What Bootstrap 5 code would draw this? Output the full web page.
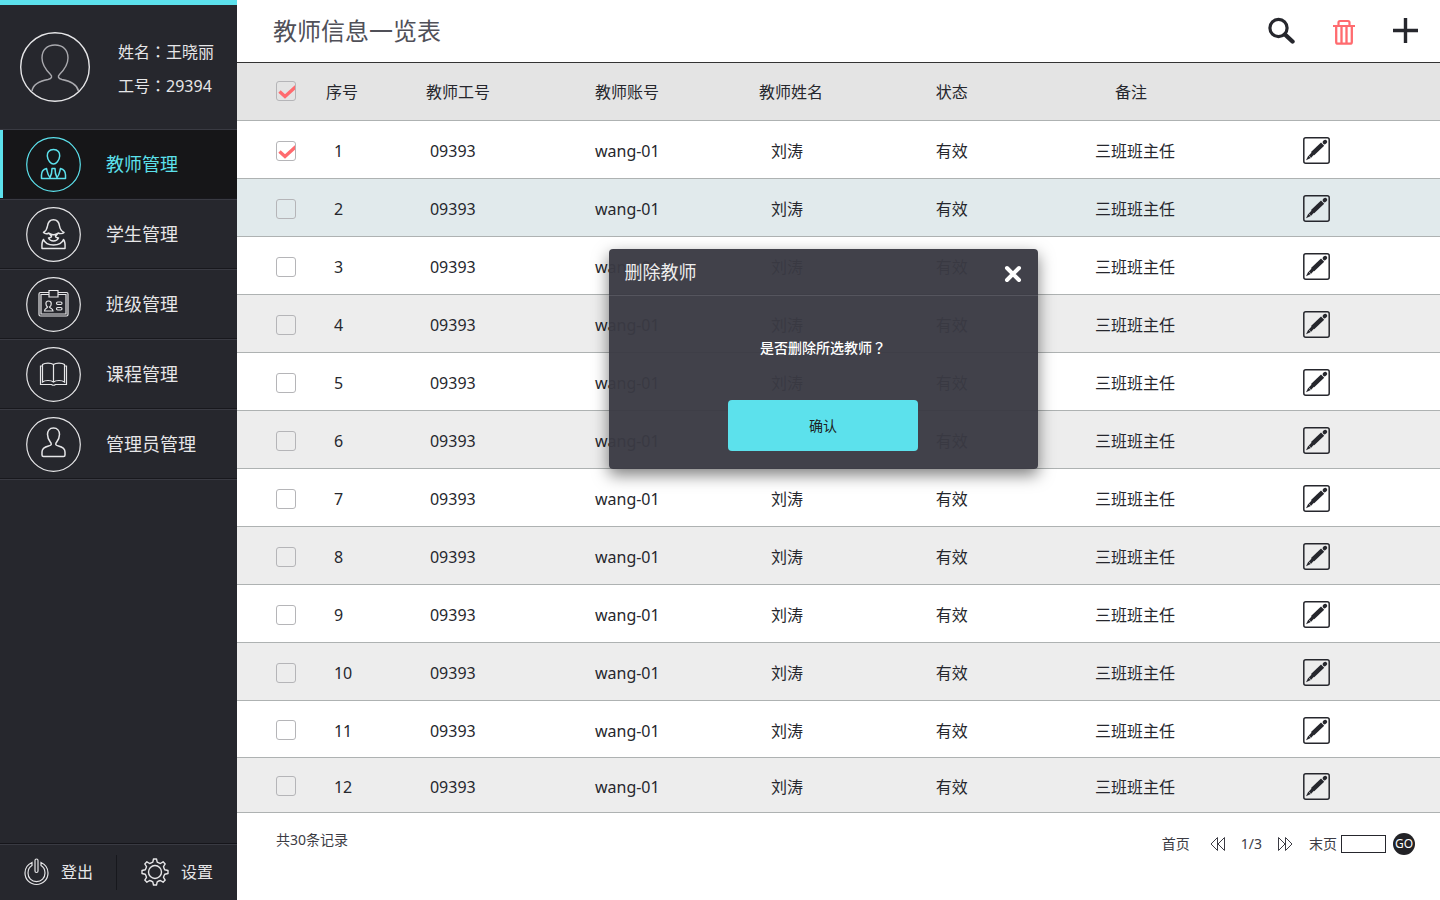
<!DOCTYPE html>
<html lang="zh-CN">
<head>
<meta charset="utf-8">
<meta name="viewport" content="width=device-width, initial-scale=1">
<title>教师信息一览表</title>
<link href="https://cdn.jsdelivr.net/npm/bootstrap@5.3.0/dist/css/bootstrap.min.css" rel="stylesheet">
<style>
:root{--cyan:#5ce1ec;--dark:#26272d;--ink:#26272d;--red:#ff6b6f}
body{font-family:"Noto Sans","Noto Sans CJK SC",sans-serif;font-size:16px;line-height:24px;color:var(--ink);background:#fff}
.mid-punct{font-family:"Noto Sans CJK TC",sans-serif}
svg{display:block;fill:none;stroke:currentColor}
.icon-btn{display:block;border:0;background:none;padding:0;color:inherit}

/* sidebar */
.side{width:237px;background:var(--dark);border-top:5px solid var(--cyan);color:#e6e6e8}
.profile{height:124px;padding:27px 20px 0;gap:28px}
.profile-text{padding-top:2px}
.profile p{line-height:34px;height:34px;margin:0}
.side-link{height:70px;padding-left:26px;gap:25px;font-size:18px;color:#e6e6e8;text-decoration:none;border-top:1px solid #393a42;border-bottom:1px solid #18181d}
.side-link.active{background:#161618;color:var(--cyan);box-shadow:inset 3px 0 var(--cyan)}
.side-end{border-top:1px solid #393a42}
.side-foot{height:57px;border-top:1px solid #15151a;box-shadow:inset 0 1px #393a42}
.side-foot a{color:#e6e6e8;text-decoration:none;gap:12px}
.foot-rule{width:1px;height:35px;margin-left:23px;background:#17181d}

/* main */
.head{height:63px;padding:0 22px 0 36px;border-bottom:1px solid #333}
.head h1{font-size:24px;line-height:36px;font-weight:400;color:#505058;margin:0}
.tools{gap:38px}
.teachers{table-layout:fixed;width:100%;border-collapse:collapse}
.teachers th,.teachers td{font-weight:400;padding:2px 0 0 8px;border-bottom:1px solid #aeb2b2}
.teachers tr{height:58px}
.teachers thead tr{height:57px}
.teachers thead{background:#e4e4e4}
.teachers tbody td{padding-top:4px}
.teachers tbody tr:nth-child(even){background:#ededed}
.teachers tbody tr.hovered{background:#e1eaec}
.teachers tbody tr:nth-child(11){height:57px}
.teachers tbody tr:nth-child(12){height:55px}
.teachers .c-check{padding-left:39px}
.teachers th.c-check{padding-top:0}
.teachers tbody td.c-check{padding-top:3px}
.teachers td.c-no{padding-left:16px}
.teachers td.c-id{padding-left:12px}
.teachers td.c-name{padding-left:20px}
.teachers th.c-note{padding-left:28px}
.teachers tbody td.c-edit{padding-top:3px}
.tick.form-check-input{display:block;width:20px;height:20px;margin:0;border:1px solid #b5b5b8;border-radius:3px;background-color:transparent}
.tick.form-check-input:checked{background-color:transparent;border-color:#b5b5b8;background-size:20px 20px;background-position:center;background-image:url("data:image/svg+xml,%3Csvg xmlns='http://www.w3.org/2000/svg' viewBox='0 0 20 20'%3E%3Cpath d='M3.500 10.500l5.500 5L20 5.500' fill='none' stroke='%23ff6b6f' stroke-width='3.400'/%3E%3C/svg%3E")}
.foot{padding:15px 25px 0 39px;font-size:14px;color:#3c3c44}
.foot a{color:inherit;text-decoration:none}
.pager{padding-top:4px}
.page-box{width:45px;height:18px;border:1px solid var(--ink);padding:0 4px;font-size:12px;margin:0 7px 0 4px}
.go{width:22px;height:22px;border:0;border-radius:50%;background:#222226;color:#fff;font-size:12px;line-height:22px;padding:0;text-align:center}

/* confirm dialog, floats over the table */
.confirm{position:absolute;top:249px;left:calc(50% - 230px);width:429px;height:220px;border-radius:4px;background:rgba(58,58,67,.965);box-shadow:0 6px 16px rgba(0,0,0,.5);color:#fff}
.confirm header{height:47px;padding:0 16px;border-bottom:1px solid #55555e}
.confirm h2{font-size:18px;line-height:46px;margin:0;font-weight:400;color:#eee}
.confirm p{height:24px;margin:39px 0 41px;font-size:14px;font-weight:500}
.ok-btn.btn{width:190px;height:51px;background:var(--cyan);border:0;border-radius:4px;font-size:14px;color:#1d1d22}
</style>
</head>
<body>
<svg width="0" height="0" class="position-absolute" aria-hidden="true">
  <symbol id="i-edit" viewBox="0 0 27 27">
    <rect x=".8" y=".8" width="25.4" height="25.4" rx="2" stroke-width="1.5"/>
    <path d="M3 23.300l2.400-4.800 2.400 2.400z" fill="currentColor" stroke="none"/>
    <path d="M7 19.700l3.200-3.500" stroke-width="3.200"/>
    <path d="M9.600 16.700L19.600 7.200" stroke-width="4.600"/>
    <path d="M21.600 5.300l.6-.5" stroke-width="4" stroke-linecap="round"/>
  </symbol>
</svg>
<div class="d-flex min-vh-100">
  <aside class="side d-flex flex-column flex-shrink-0">
    <div class="profile d-flex">
      <svg width="70" height="70" viewBox="0 0 70 70" class="flex-shrink-0" aria-hidden="true">
        <circle cx="35" cy="35" r="34.3" stroke-width="1.4"/>
        <path d="M12 59C13 52 20 49 28 47.500C32 46.500 32.500 44.500 30.500 42.500C26 38 22 32 22 26C22 18 27 13 35 13S48 18 48 26C48 32 44 38 39.500 42.500C37.500 44.500 38 46.500 42 47.500C50 49 57 52 58.500 59" stroke="#a9a9ae" stroke-width="1.4"/>
      </svg>
      <div class="profile-text">
        <p>姓名<span class="mid-punct" lang="zh-TW">：</span>王晓丽</p>
        <p>工号<span class="mid-punct" lang="zh-TW">：</span>29394</p>
      </div>
    </div>
    <nav>
      <a href="#" class="side-link active d-flex align-items-center" aria-current="page">
        <svg width="55" height="55" viewBox="0 0 55 55" stroke-width="1.200"><circle cx="27.500" cy="27.500" r="26.800"/><path stroke-width="1.500" stroke-linejoin="round" d="M27.500 12.500C23 12.500 21 15.500 21.300 19C21.600 23.500 25 27 27.500 27S33.400 23.500 33.700 19C34 15.500 32 12.500 27.500 12.500zM20.500 31.500C17 32.500 15.500 35 15.500 38V41.500H39.500V38C39.500 35 38 32.500 34.500 31.500C33.500 35 33.500 38 31 40.500C29.500 38 29 35 29 31.500H26C26 35 25.500 38 24 40.500C21.500 38 21.500 35 20.500 31.500z"/></svg>
        教师管理</a>
      <a href="#" class="side-link d-flex align-items-center">
        <svg width="55" height="55" viewBox="0 0 55 55" stroke-width="1.200"><circle cx="27.500" cy="27.500" r="26.800"/><path stroke-width="1.500" stroke-linejoin="round" d="M17.500 25.500C20 24 21 22 21.500 19C22 15 24 12.700 27.500 12.700S33 15 33.500 19C34 22 35 24 38 25.500C36.500 27 33.500 26.800 32 26C31 28 29.500 28.500 29.500 29.500S30.500 30.500 32.500 31C31.500 33 29.500 34 27.500 34S23.500 33 22.500 31C24.500 30.500 25.500 30.500 25.500 29.500S24 28 23 26C21.500 26.800 19 27 17.500 25.500zM24 26.500Q27.500 29 31 26.500M17.500 32.500Q15.500 35 16 41.500H39Q39.500 35 37.500 32.500C36 36.500 32 38 27.500 38S19 36.500 17.500 32.500z"/></svg>
        学生管理</a>
      <a href="#" class="side-link d-flex align-items-center">
        <svg width="55" height="55" viewBox="0 0 55 55" stroke-width="1.200"><circle cx="27.500" cy="27.500" r="26.800"/><path d="M23 15.500H14.500Q13 15.500 13 17V37.500Q13 39 14.500 39H40.500Q42 39 42 37.500V17Q42 15.500 40.500 15.500H32M23 17.500H15V37H40V17.500H32M23 13.500H32V20H23z"/><path d="M22.500 24C18.500 24 20 29 21.500 30C21 31.500 18.500 31 18.500 34H27C27 31 24 31.500 23.500 30C25.500 29 26.500 24 22.500 24z"/><rect x="30.500" y="25" width="5.500" height="2.500" rx="1.200"/><rect x="30.500" y="30.500" width="5.500" height="2.500" rx="1.200"/></svg>
        班级管理</a>
      <a href="#" class="side-link d-flex align-items-center">
        <svg width="55" height="55" viewBox="0 0 55 55" stroke-width="1.200"><circle cx="27.500" cy="27.500" r="26.800"/><path d="M27.500 17.500C25 15.600 19 15.600 16.500 17.500V35C19 33 25 33 27.500 35C30 33 36 33 38.500 35V17.500C36 15.600 30 15.600 27.500 17.500zV35M16.500 19H14.500V37.500H25.500Q27.500 39 29.500 37.500H40.500V19H38.500"/></svg>
        课程管理</a>
      <a href="#" class="side-link d-flex align-items-center">
        <svg width="55" height="55" viewBox="0 0 55 55" stroke-width="1.200"><circle cx="27.500" cy="27.500" r="26.800"/><path stroke-width="1.500" d="M27.500 11C23.500 11 21.500 14 21.500 17.500C21.500 22 24 24.500 25 26C25.800 27.500 25 28.500 22.500 29C18.500 30 16 31.500 16 35V38Q16 39.500 17.500 39.500H37.500Q39 39.500 39 38V35C39 31.500 36.500 30 32.500 29C30 28.500 29.200 27.500 30 26C31 24.500 33.500 22 33.500 17.500C33.500 14 31.500 11 27.500 11z"/></svg>
        管理员管理</a>
      <div class="side-end"></div>
    </nav>
    <div class="side-foot mt-auto d-flex align-items-center">
      <a href="#" class="d-flex align-items-center ps-4">
        <svg width="25" height="28" viewBox="0 0 25 28" stroke-width="1.200"><path d="M8 4.500C3.500 6.500 1 10.500 1 15C1 21.500 6 26.500 12.500 26.500S24 21.500 24 15C24 10.500 21.500 6.500 17 4.500V7.500C19.500 9 21 12 21 15C21 20 17.500 23.600 12.500 23.600S4 20 4 15C4 12 5.500 9 8 7.500z"/><rect x="11" y="1" width="3" height="13.500" rx="1.500"/></svg>
        登出</a>
      <span class="foot-rule"></span>
      <a href="#" class="d-flex align-items-center ps-4">
        <svg width="28" height="28" viewBox="0 0 28 28" stroke-width="1.400" stroke-linejoin="round"><circle cx="14" cy="14" r="6.500"/><path d="M11.800 4.200L12.500 1H15.500L16.200 4.200A10 10 0 0 0 19.400 5.500L22.100 3.800L24.200 5.900L22.500 8.600A10 10 0 0 0 23.800 11.800L27 12.500V15.500L23.800 16.200A10 10 0 0 0 22.500 19.400L24.200 22.100L22.100 24.200L19.400 22.500A10 10 0 0 0 16.200 23.800L15.500 27H12.500L11.800 23.800A10 10 0 0 0 8.600 22.500L5.900 24.200L3.800 22.100L5.500 19.400A10 10 0 0 0 4.200 16.200L1 15.500V12.500L4.200 11.800A10 10 0 0 0 5.500 8.600L3.800 5.900L5.900 3.800L8.600 5.500A10 10 0 0 0 11.800 4.200z"/></svg>
        设置</a>
    </div>
  </aside>

  <main class="flex-grow-1 position-relative">
    <div class="head d-flex align-items-center justify-content-between">
      <h1>教师信息一览表</h1>
      <div class="tools d-flex align-items-center">
        <button type="button" class="icon-btn" aria-label="搜索"><svg width="28" height="28" viewBox="0 0 28 28"><circle cx="11.500" cy="11" r="8.600" stroke-width="3.200"/><path d="M18 17.500L25.500 24.500" stroke-width="4.400" stroke-linecap="round"/></svg></button>
        <button type="button" class="icon-btn" aria-label="删除"><svg width="22" height="28" viewBox="0 0 22 28" color="#ff6b6f"><path d="M0 9H22M5.500 8V5.500Q5.500 4 7 4H15Q16.500 4 16.500 5.500V8" stroke-width="2.200"/><path d="M3.200 10V25Q3.200 26.700 5 26.700H17Q18.800 26.700 18.800 25V10M8.500 10V26M13.500 10V26" stroke-width="2.300"/></svg></button>
        <button type="button" class="icon-btn" aria-label="添加"><svg width="25" height="26" viewBox="0 0 25 26"><path d="M0 12.500H25M12.500 0V25" stroke-width="3.400"/></svg></button>
      </div>
    </div>

    <table class="teachers">
      <colgroup><col style="width:6.73%"><col style="width:8.31%"><col style="width:14.05%"><col style="width:13.63%"><col style="width:14.71%"><col style="width:13.22%"><col style="width:17.29%"><col></colgroup>
      <thead>
        <tr><th class="c-check"><input type="checkbox" class="tick form-check-input" aria-label="全选" checked></th><th>序号</th><th>教师工号</th><th>教师账号</th><th>教师姓名</th><th>状态</th><th class="c-note">备注</th><th></th></tr>
      </thead>
      <tbody id="rows"></tbody>
    </table>

    <div class="foot d-flex justify-content-between">
      <span>共30条记录</span>
      <form class="pager d-flex align-items-center" onsubmit="return false">
        <a href="#">首页</a>
        <a href="#" class="ms-3 px-1" aria-label="上一页"><svg width="15" height="16" viewBox="0 0 15 16"><path d="M7.500 1.500V14.500L1 8zM14.500 1.500V14.500L8 8z"/></svg></a>
        <span class="mx-2 px-1">1/3</span>
        <a href="#" class="px-1" aria-label="下一页"><svg width="15" height="16" viewBox="0 0 15 16"><path d="M.5 1.500V14.500L7 8zM7.500 1.500V14.500L14 8z"/></svg></a>
        <a href="#" class="ms-2 ps-1">末页</a>
        <input type="text" class="page-box" aria-label="页码">
        <button type="submit" class="go">GO</button>
      </form>
    </div>

    <section class="confirm" role="dialog" aria-labelledby="confirmTitle">
      <header class="d-flex justify-content-between align-items-center">
        <h2 id="confirmTitle">删除教师</h2>
        <button type="button" class="icon-btn pt-1" aria-label="关闭"><svg width="18" height="18" viewBox="0 0 18 18"><path d="M3 3L15 15M15 3L3 15" stroke-width="4" stroke-linecap="round"/></svg></button>
      </header>
      <div class="text-center">
        <p>是否删除所选教师<span class="mid-punct" lang="zh-TW">？</span></p>
        <button type="button" class="btn ok-btn">确认</button>
      </div>
    </section>
  </main>
</div>
<script src="https://cdn.jsdelivr.net/npm/bootstrap@5.3.0/dist/js/bootstrap.bundle.min.js"></script>
<script>
const teacher = { id: '09393', account: 'wang-01', name: '刘涛', state: '有效', note: '三班班主任' };
document.getElementById('rows').innerHTML = Array.from({ length: 12 }, (_, i) => `
  <tr class="${i === 1 ? 'hovered' : ''}">
    <td class="c-check"><input type="checkbox" class="tick form-check-input" aria-label="选择第${i + 1}行" ${i === 0 ? 'checked' : ''}></td>
    <td class="c-no">${i + 1}</td><td class="c-id">${teacher.id}</td><td>${teacher.account}</td>
    <td class="c-name">${teacher.name}</td><td>${teacher.state}</td><td>${teacher.note}</td>
    <td class="c-edit"><button type="button" class="icon-btn" aria-label="编辑"><svg width="27" height="27"><use href="#i-edit"/></svg></button></td>
  </tr>`).join('');
</script>
</body>
</html>
